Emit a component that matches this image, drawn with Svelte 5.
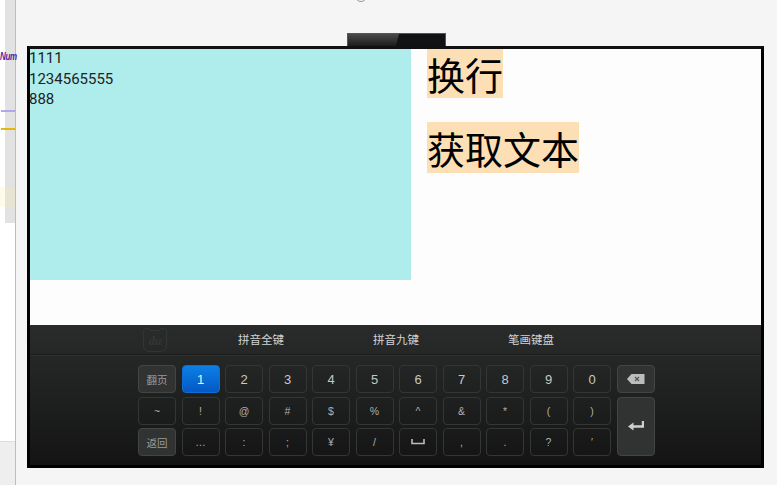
<script lang="ts">
  const tabs = ["拼音全键", "拼音九键", "笔画键盘"];

  interface Key {
    label: string;
    kind?: "fn" | "active" | "space" | "back";
    small?: boolean;
  }

  const row1: Key[] = [
    { label: "翻页", kind: "fn", small: true },
    { label: "1", kind: "active" },
    ...["2", "3", "4", "5", "6", "7", "8", "9", "0"].map((label) => ({ label })),
    { label: "", kind: "back" },
  ];
  const row2: Key[] = ["~", "!", "@", "#", "$", "%", "^", "&", "*", "(", ")"].map((label) => ({ label, small: true }));
  const row3: Key[] = [
    { label: "返回", kind: "fn", small: true },
    ...["…", ":", ";", "¥", "/"].map((label) => ({ label, small: true })),
    { label: "", kind: "space" },
    ...[",", ".", "?", "′"].map((label) => ({ label, small: true })),
  ];
  const keys = [...row1, ...row2, ...row3];
  let text = "1111\n1234565555\n888";
</script>

<div class="page">
  <aside class="side">
    <span class="num">Num</span>
    <div class="track">
      <span class="rule purple"></span>
      <span class="rule yellow"></span>
      <span class="hl"></span>
    </div>
    <div class="side-foot"></div>
  </aside>

  <main class="main">
    <span class="dot"></span>
    <div class="camera"><span class="cam-dark"></span></div>
    <div class="frame">
      <div class="content">
        <pre class="text"><span class="lines">{text}</span></pre>
        <div class="actions">
          <button class="action">换行</button>
          <button class="action tall">获取文本</button>
        </div>
      </div>
      <div class="ime">
        <div class="tabs">
          <svg class="logo" viewBox="0 0 26 26" width="26" height="26">
            <path d="M5 1.500a3.500 3.500 0 0 1 3.500 2h9A3.500 3.500 0 0 1 21 1.500 3.500 3.500 0 0 1 24.500 6.500V18c0 4.500-3 6.500-6 6.500h-11c-3 0-6-2-6-6.500V6.500A3.500 3.500 0 0 1 5 1.500z" fill="none" stroke="#333535" stroke-width="1.200" />
            <text x="13" y="18" text-anchor="middle" class="logo-text">du</text>
          </svg>
          {#each tabs as tab}
            <span class="tab">{tab}</span>
          {/each}
        </div>
        <div class="keys">
          {#each keys as key}
            <div class="key {key.kind ?? ''}" class:small={key.small}>
              {#if key.kind === "back"}
                <svg viewBox="0 0 18 10" width="18" height="10">
                  <path d="M0 5 4.500 0H17.500V10H4.500z" fill="#bdbdbd" />
                  <path d="M8 3l4 4M12 3l-4 4" stroke="#555" stroke-width="1.200" />
                </svg>
              {:else if key.kind === "space"}
                <svg viewBox="0 0 14 6" width="14" height="6">
                  <path d="M1 0V4.500H13V0" fill="none" stroke="#bcbcbc" stroke-width="1.600" />
                </svg>
              {:else}
                {key.label}
              {/if}
            </div>
          {/each}
          <div class="key fn enter">
            <svg viewBox="0 0 16 10" width="16" height="10">
              <path d="M15 0V5.500H5" fill="none" stroke="#cfcfcf" stroke-width="2.400" />
              <path d="M0 5.500 5.500 1.500V9.500z" fill="#cfcfcf" />
            </svg>
          </div>
        </div>
      </div>
    </div>
  </main>
</div>

<style>
  :global(body) {
    margin: 0;
    background: #f5f5f5;
    overflow: hidden;
  }

  .page {
    display: flex;
    height: 485px;
    font-family: Roboto, "Noto Sans CJK SC", sans-serif;
  }

  .side {
    position: relative;
    width: 15px;
    flex: none;
    display: flex;
    flex-direction: column;
    background: #fff;
    border-right: 1px solid #bdbdbd;
  }

  .track {
    position: relative;
    height: 223px;
    margin-left: 5px;
    background: #e2e2e2;
  }

  .num {
    position: absolute;
    left: 0;
    top: 52px;
    z-index: 1;
    font: italic bold 8px "Liberation Sans", sans-serif;
    letter-spacing: -0.3px;
    color: #5a1a9c;
    transform: scaleY(1.3);
    white-space: nowrap;
  }

  .rule {
    position: absolute;
    left: -4px;
    right: 0;
    height: 2px;
  }

  .purple {
    top: 110px;
    background: #b2a5e8;
  }

  .yellow {
    top: 128px;
    background: #e0b90c;
  }

  .hl {
    position: absolute;
    left: -5px;
    right: 0;
    top: 187px;
    height: 20px;
    background: rgba(255, 236, 160, 0.22);
  }

  .side-foot {
    margin-top: 218px;
    flex: 1;
    background: #eee;
    border-top: 1px solid #ddd;
  }

  .main {
    position: relative;
    flex: 1;
    padding: 33px 0 0 11px;
  }

  .dot {
    position: absolute;
    left: 339px;
    top: -10px;
    width: 10px;
    height: 10px;
    border: 1px solid #999;
    border-radius: 50%;
  }

  .camera {
    position: relative;
    width: 97px;
    height: 12px;
    margin-left: 320px;
    background: linear-gradient(#4a4a4a, #1c1c1c);
    border: 1px solid #555;
    border-bottom: none;
    overflow: hidden;
  }

  .cam-dark {
    position: absolute;
    top: 0;
    right: 0;
    bottom: 0;
    width: 49px;
    background: #111214;
    clip-path: polygon(3px 0, 100% 0, 100% 100%, 0 100%);
  }

  .frame {
    box-sizing: border-box;
    width: 737px;
    height: 422px;
    border: 3px solid #000;
    border-top-color: #111;
    background: #fff;
    display: flex;
    flex-direction: column;
  }

  .content {
    flex: 1;
    display: flex;
    align-items: flex-start;
    gap: 16px;
    background: #fdfdfd;
  }

  .text {
    box-sizing: border-box;
    width: 381px;
    height: 231px;
    margin: 0;
    background: #afecec;
    color: #222;
    font: 15px/20.500px Roboto, sans-serif;
  }

  .lines {
    display: block;
    margin: -1px 0 0 -1px;
  }

  .actions {
    display: flex;
    flex-direction: column;
    align-items: flex-start;
    gap: 24px;
  }

  .action {
    height: 49px;
    padding: 0;
    border: none;
    background: #fcdfb4;
    color: #000;
    font: 38px/49px "Noto Sans CJK SC", sans-serif;
  }

  .tall {
    height: 51px;
  }

  .ime {
    height: 140px;
    flex: none;
    background: linear-gradient(#2a2c2c, #141414);
  }

  .tabs {
    position: relative;
    display: flex;
    height: 29px;
    padding-left: 208px;
    gap: 89px;
    align-items: center;
    border-bottom: 1px solid #1b1b1b;
    box-shadow: 0 1px 0 #2e3030;
  }

  .logo {
    position: absolute;
    left: 112px;
    top: 2px;
  }

  .logo-text {
    font: italic bold 12px "Liberation Serif", serif;
    fill: #343636;
  }

  .tab {
    width: 46px;
    color: #d2d2d2;
    font: 11.500px/1 "Noto Sans CJK SC", sans-serif;
    white-space: nowrap;
  }

  .keys {
    display: grid;
    grid-template-columns: repeat(12, 38px);
    grid-auto-rows: 28px;
    column-gap: 5.500px;
    row-gap: 3.500px;
    margin: 10px 0 0 108px;
  }

  .key {
    box-sizing: border-box;
    display: flex;
    align-items: center;
    justify-content: center;
    border: 1px solid #343636;
    border-radius: 4px;
    color: #c8c8c8;
    font: 13px "Liberation Sans", "Noto Sans CJK SC", sans-serif;
  }

  .small {
    font-size: 10.500px;
    color: #aeaeae;
  }

  .fn,
  .back {
    background: #313333;
    border-color: #434545;
    color: #999;
  }

  .active {
    background: linear-gradient(#0c7fe6, #0558c4);
    border-color: #0c6fd6;
    color: #e8f2ff;
  }

  .enter {
    grid-column: 12;
    grid-row: 2 / span 2;
  }
</style>
